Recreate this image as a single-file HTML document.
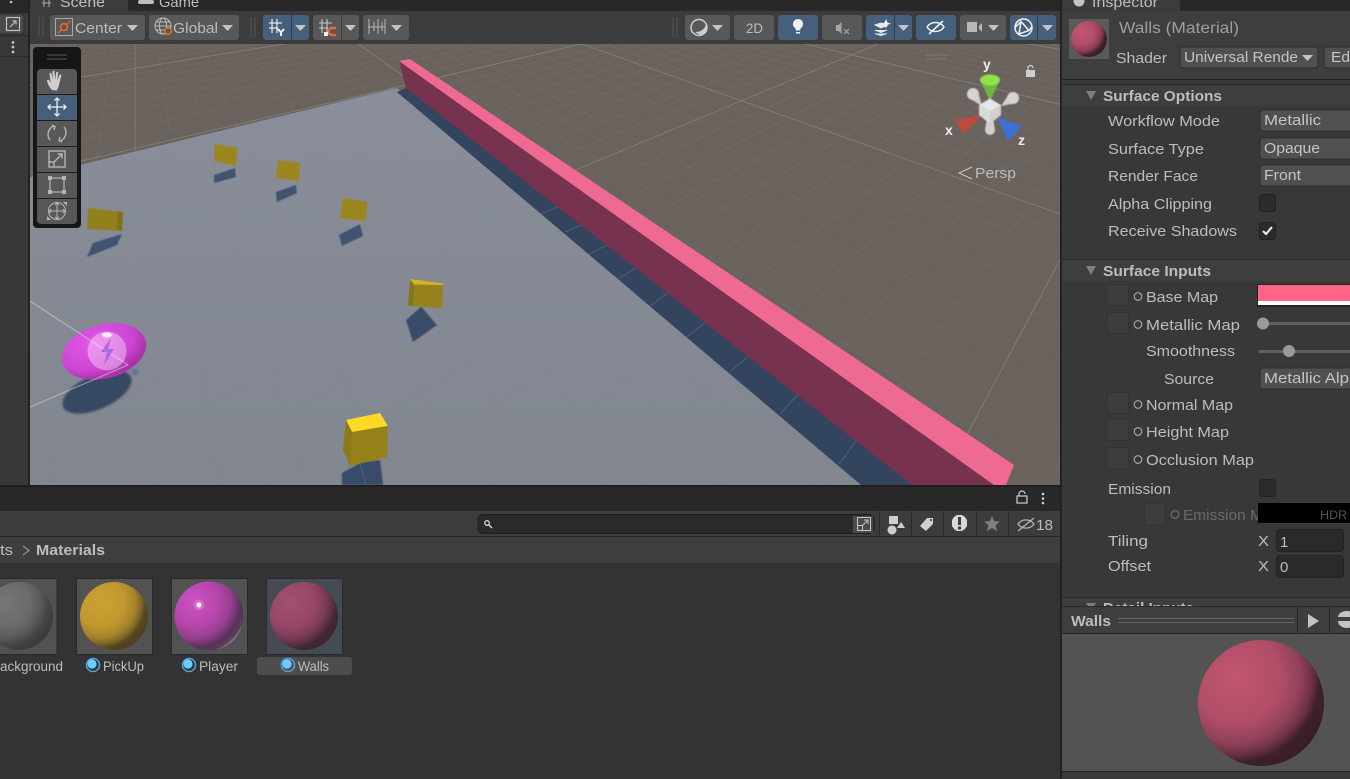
<!DOCTYPE html>
<html><head><meta charset="utf-8"><title>Unity Editor</title>
<style>
html,body{margin:0;padding:0;background:#383838;overflow:hidden}
svg{display:block}
text{font-family:"Liberation Sans",sans-serif;font-size:15px;fill:#bdbdbd}
.b{font-weight:bold;font-size:14.5px}
.t{fill:#c4c4c4}
.d{fill:#6a6a6a}
.btn{fill:#585858}
.blue{fill:#46607c}
.arrow{fill:#c4c4c4}
</style></head><body>
<svg width="1350" height="779" viewBox="0 0 1350 779" xmlns="http://www.w3.org/2000/svg">
<defs>
<radialGradient id="gW" cx=".3" cy=".3" r=".8"><stop offset="0" stop-color="#c2566f"/><stop offset=".45" stop-color="#b04e68"/><stop offset=".65" stop-color="#8f4058"/><stop offset=".76" stop-color="#6a3044"/><stop offset=".83" stop-color="#3f2229"/><stop offset="1" stop-color="#351d24"/></radialGradient>
<radialGradient id="gWd" cx=".3" cy=".3" r=".8"><stop offset="0" stop-color="#a4506f"/><stop offset=".45" stop-color="#964766"/><stop offset=".65" stop-color="#7b3b58"/><stop offset=".76" stop-color="#5f3045"/><stop offset=".84" stop-color="#432935"/><stop offset="1" stop-color="#3a2430"/></radialGradient>
<radialGradient id="gY" cx=".3" cy=".3" r=".8"><stop offset="0" stop-color="#cba233"/><stop offset=".45" stop-color="#bf982f"/><stop offset=".65" stop-color="#a3822a"/><stop offset=".76" stop-color="#7e6526"/><stop offset=".84" stop-color="#54461f"/><stop offset="1" stop-color="#4a3f22"/></radialGradient>
<radialGradient id="gP" cx=".3" cy=".3" r=".8"><stop offset="0" stop-color="#d052c4"/><stop offset=".45" stop-color="#b445aa"/><stop offset=".65" stop-color="#95408e"/><stop offset=".76" stop-color="#73356f"/><stop offset=".83" stop-color="#53325a"/><stop offset=".93" stop-color="#5b3f58"/><stop offset="1" stop-color="#b79ab3"/></radialGradient>
<radialGradient id="gG" cx=".3" cy=".3" r=".8"><stop offset="0" stop-color="#767676"/><stop offset=".45" stop-color="#6b6b6b"/><stop offset=".65" stop-color="#5a5a5a"/><stop offset=".78" stop-color="#464646"/><stop offset=".9" stop-color="#3d3d3d"/><stop offset="1" stop-color="#3b3b3b"/></radialGradient>
<radialGradient id="gBody" cx=".4" cy=".3" r=".8"><stop offset="0" stop-color="#e35ae8"/><stop offset=".6" stop-color="#cc44d2"/><stop offset=".85" stop-color="#a531a8"/><stop offset="1" stop-color="#c13ec6"/></radialGradient>
<linearGradient id="gPlane" x1="0" y1="0" x2="0" y2="1"><stop offset="0" stop-color="#898e9a"/><stop offset="1" stop-color="#81868f"/></linearGradient>
<filter id="bl" x="-20%" y="-20%" width="140%" height="140%"><feGaussianBlur stdDeviation=".5"/></filter>
<filter id="bl2" x="-20%" y="-20%" width="140%" height="140%"><feGaussianBlur stdDeviation="1"/></filter>
<clipPath id="cs"><rect x="30" y="44" width="1030" height="441"/></clipPath>
<clipPath id="cr"><rect x="1062" y="0" width="288" height="779"/></clipPath>
<clipPath id="cp"><polygon points="30,177 397,88 950,485 30,485"/></clipPath>
<path id="gridMinor" fill="none" d="M135 -115L-371 485M135 -115L-287 485M135 -115L-202 485M135 -115L-118 485M135 -115L-34 485M135 -115L51 485M135 -115L219 485M135 -115L304 485M135 -115L388 485M135 -115L472 485M135 -115L557 485M135 -115L641 485M135 -115L725 485M135 -115L810 485M135 -115L894 485M135 -115L1063 485M135 -115L1147 485M135 -115L1232 485M135 -115L1316 485M135 -115L1400 485M135 -115L1485 485M135 -115L1569 485M135 -115L1653 485M135 -115L1738 485M135 -115L1906 485M135 -115L1991 485M135 -115L2075 485M135 -115L2159 485M135 -115L2244 485M135 -115L2328 485M135 -115L2412 485M135 -115L2497 485M135 -115L2581 485M135 -115L2750 485M135 -115L2834 485M135 -115L2919 485M135 -115L3003 485M135 -115L3087 485M135 -115L3172 485M135 -115L3256 485M135 -115L3340 485M135 -115L3425 485M135 -115L3593 485M135 -115L3678 485M1260 -115L-3320 485M1260 -115L-3208 485M1260 -115L-3096 485M1260 -115L-2984 485M1260 -115L-2871 485M1260 -115L-2759 485M1260 -115L-2647 485M1260 -115L-2535 485M1260 -115L-2311 485M1260 -115L-2199 485M1260 -115L-2087 485M1260 -115L-1975 485M1260 -115L-1863 485M1260 -115L-1750 485M1260 -115L-1638 485M1260 -115L-1526 485M1260 -115L-1414 485M1260 -115L-1190 485M1260 -115L-1078 485M1260 -115L-966 485M1260 -115L-854 485M1260 -115L-741 485M1260 -115L-629 485M1260 -115L-517 485M1260 -115L-405 485M1260 -115L-293 485M1260 -115L-69 485M1260 -115L43 485M1260 -115L155 485M1260 -115L267 485M1260 -115L379 485M1260 -115L492 485M1260 -115L604 485M1260 -115L716 485M1260 -115L828 485M1260 -115L1052 485"/>
<path id="gridMajor" fill="none" d="M135 -115L135 485M135 -115L978 485M135 -115L1822 485M135 -115L2666 485M135 -115L3509 485M1260 -115L-2423 485M1260 -115L-1302 485M1260 -115L-181 485M1260 -115L940 485"/>
</defs>

<!-- base -->
<rect width="1350" height="779" fill="#383838"/>

<!-- left strip -->
<rect x="0" y="0" width="30" height="485" fill="#383838"/>
<rect x="0" y="0" width="30" height="13" fill="#282828"/>
<circle cx="11" cy="2" r="1.3" fill="#bbb"/>
<rect x="0" y="13" width="29" height="22" fill="#3c3c3c"/>
<rect x="-6" y="14" width="30" height="20" rx="3" fill="#4a4a4a" stroke="#2b2b2b"/>
<g fill="none" stroke="#c0c0c0" stroke-width="1.2"><rect x="6.5" y="17.5" width="13" height="13"/><path d="M10 27l6-6M12.5 21h3.500v3.500"/></g>
<rect x="0" y="35" width="29" height="1" fill="#2a2a2a"/>
<rect x="0" y="56" width="29" height="1" fill="#2a2a2a"/>
<circle cx="13" cy="42.500" r="1.4" fill="#c4c4c4"/><circle cx="13" cy="47" r="1.4" fill="#c4c4c4"/><circle cx="13" cy="52" r="1.4" fill="#c4c4c4"/>
<rect x="28" y="0" width="2" height="485" fill="#232323"/>

<!-- scene tabs -->
<rect x="30" y="0" width="1030" height="11" fill="#282828"/>
<rect x="30" y="0" width="98" height="11" fill="#3c3c3c"/>
<text x="60" y="7" textLength="45" lengthAdjust="spacingAndGlyphs">Scene</text>
<path d="M44 0v7M49 0v7M42 3h9" stroke="#aaa" fill="none"/>
<rect x="138" y="0" width="16" height="4" rx="2" fill="#bdbdbd"/>
<text x="159" y="7" textLength="40" lengthAdjust="spacingAndGlyphs">Game</text>

<!-- scene toolbar -->
<rect x="30" y="11" width="1030" height="33" fill="#3c3c3c"/>
<path d="M39 17v20M43 17v20M255 17v20M251 17v20M673 17v20M677 17v20" stroke="#565656"/>
<rect class="btn" x="50" y="15" width="95" height="25" rx="3"/>
<rect x="55.500" y="18.500" width="17" height="17" fill="none" stroke="#aaa"/>
<circle cx="64" cy="27" r="3.500" fill="none" stroke="#ea6a33" stroke-width="1.600"/><path d="M58 33l3.500-3.500M67 24l3.500-3.500" stroke="#ea6a33" stroke-width="1.200"/>
<text x="75" y="33" textLength="47" lengthAdjust="spacingAndGlyphs">Center</text>
<path class="arrow" d="M127 25h11l-5.500 6z"/>
<rect class="btn" x="149" y="15" width="90" height="25" rx="3"/>
<g fill="none" stroke="#bdbdbd"><circle cx="163" cy="26" r="8"/><ellipse cx="163" cy="26" rx="3.500" ry="8"/><path d="M155 26h16M156 22h14M156 30h14"/></g>
<circle cx="168" cy="31" r="3.200" fill="#585858" stroke="#ea6a33" stroke-width="1.600"/>
<text x="173" y="33" textLength="45" lengthAdjust="spacingAndGlyphs">Global</text>
<path class="arrow" d="M222 25h11l-5.500 6z"/>
<rect class="blue" x="263" y="15" width="46" height="25" rx="3"/><rect x="291" y="15" width="1" height="25" fill="#2d3d50"/>
<g stroke="#e8e8e8" fill="none" stroke-width="1.200"><path d="M272 19v14M277 19v14M269 23h13M269 28h9"/></g>
<path d="M278 29l3 3.500 3-3.500M281 32v4" stroke="#f2f2f2" stroke-width="2" fill="none"/>
<path class="arrow" d="M295 25h11l-5.500 6z"/>
<rect class="btn" x="313" y="15" width="46" height="25" rx="3"/><rect x="341" y="15" width="1" height="25" fill="#3a3a3a"/>
<g stroke="#c8c8c8" fill="none" stroke-width="1.100"><path d="M322 19v14M327 19v14M319 23h13M319 28h9"/></g>
<path d="M336 28h-4a3.500 3.500 0 0 0 0 7h4" fill="none" stroke="#ea6a33" stroke-width="2.400"/>
<rect x="324" y="32" width="4" height="4" fill="#eee"/>
<path class="arrow" d="M345 25h11l-5.500 6z"/>
<rect class="btn" x="363" y="15" width="46" height="25" rx="3"/>
<path d="M369 19v15M374 22v9M378 19v15M382 22v9M385 19v15M368 27h17" stroke="#b8b8b8" fill="none"/>
<path class="arrow" d="M391 25h11l-5.500 6z"/>
<rect class="btn" x="685" y="15" width="45" height="25" rx="3"/>
<circle cx="699" cy="27.500" r="8" fill="none" stroke="#cfcfcf" stroke-width="1.500"/><path d="M706 23c-.5 6-5 9-11 9 4 4 10 3 12-1 1-3 0-6-1-8z" fill="#cfcfcf"/>
<path class="arrow" d="M712 25h11l-5.500 6z"/>
<rect class="btn" x="734" y="15" width="40" height="25" rx="3"/>
<text x="746" y="33" textLength="17" lengthAdjust="spacingAndGlyphs" style="font-size:14px">2D</text>
<rect class="blue" x="778" y="15" width="40" height="25" rx="3"/>
<path d="M798 19a5 5 0 0 1 3 9c-.7.7-.8 1.800-.8 2.500h-4.400c0-.7-.1-1.800-.8-2.500a5 5 0 0 1 3-9zM796 32h4v1.500h-4z" fill="#f2f2f2"/>
<rect class="btn" x="822" y="15" width="40" height="25" rx="3"/>
<path d="M836 25h2.500l3-3v12l-3-3h-2.500z" fill="#a5a5a5"/><path d="M844 29l5 5M849 29l-5 5" stroke="#a5a5a5" stroke-width="1.200"/>
<rect class="blue" x="866" y="15" width="46" height="25" rx="3"/><rect x="894" y="15" width="1" height="25" fill="#2d3d50"/>
<path d="M875 25l6-2 6 2.500-6 2.500zM875 30l6 2.500 6-2.500M875 33.500l6 2 6-2" fill="#e8e8e8" stroke="#e8e8e8"/><path d="M886 19l1.500 3.500 3.500 1.200-3.500 1.200-1.500 3.500-1.500-3.500-3.500-1.200 3.500-1.200z" fill="#f0f0f0"/>
<path class="arrow" d="M898 25h11l-5.500 6z"/>
<rect class="blue" x="916" y="15" width="40" height="25" rx="3"/>
<path d="M927 27c4-6 13-6 17 0-4 6-13 6-17 0z" fill="none" stroke="#f0f0f0" stroke-width="1.500"/><path d="M929 34l14-13" stroke="#f0f0f0" stroke-width="1.600"/>
<rect class="btn" x="960" y="15" width="46" height="25" rx="3"/>
<rect x="967" y="22" width="10" height="10" fill="#b9b9b9"/><path d="M979 26l3-3v9l-3-3z" fill="#b9b9b9"/>
<path class="arrow" d="M988 25h11l-5.500 6z"/>
<rect class="blue" x="1010" y="15" width="46" height="25" rx="3"/><rect x="1037" y="15" width="1" height="25" fill="#2d3d50"/>
<g fill="none" stroke="#f0f0f0" stroke-width="1.500"><circle cx="1023.500" cy="27.500" r="8.500"/><path d="M1015 27.500l6-6 8 9M1021 21l-2 13 10-3.500 2.500-3.500"/></g>
<path class="arrow" d="M1042 25h11l-5.500 6z"/>

<!-- scene view -->
<g clip-path="url(#cs)">
<rect x="30" y="44" width="1030" height="441" fill="#69625d"/>
<use href="#gridMinor" stroke="#8a857f" stroke-width=".6" opacity=".3"/>
<use href="#gridMajor" stroke="#8f8a86" stroke-width=".9" opacity=".7"/>
<polygon points="30,177 397,88 950,485 30,485" fill="url(#gPlane)"/>
<g clip-path="url(#cp)">
<use href="#gridMinor" stroke="#76716c" stroke-width=".6" opacity=".1"/>
<use href="#gridMajor" stroke="#928e8e" stroke-width=".8" opacity=".35"/>
</g>
<!-- wall shadow -->
<polygon points="397,92 406,88 925,485 861,485" fill="#33445e"/>
<path d="M541 214l19-8M565 232l18-8M589 254l20-10M618 279l21-13M650 306l20-15M687 337l21-17M730 372l21-18M780 414l20-22M839 464l20-27" stroke="#4f5f78" fill="none"/>
<!-- wall -->
<polygon points="399,61 406,88 912,485 994,485" fill="#76324f"/>
<polygon points="399,61 410,59 1014,465 1006,485 994,485" fill="#ee6a92"/>
<!-- pickups -->
<g filter="url(#bl)">
<polygon points="214,175 235,168 236,177 214,183" fill="#3f5270"/>
<polygon points="276,192 296,185 297,193 277,202" fill="#3f5270"/>
<polygon points="339,235 360,224 363,236 342,246" fill="#3f5270"/>
<polygon points="87,257 93,243 122,234 117,245" fill="#3f5270"/>
<polygon points="406,320 421,307 437,325 413,342" fill="#384b68"/>
<polygon points="342,473 360,463 380,460 383,485 342,485" fill="#384b68"/>
<polygon points="215,144 237,148 236,166 214,161" fill="#9a861e"/>
<polygon points="278,160 300,163 299,181 276,178" fill="#9a861e"/>
<polygon points="343,198 367,202 366,221 340,218" fill="#9a861e"/>
<polygon points="88,208 123,212 122,231 87,229" fill="#93801c"/>
<polygon points="118,211 123,212 122,231 117,230" fill="#80701c"/>
</g>
<path d="M422 308l15 18" stroke="#4f5f78" fill="none"/>
<polygon points="413,283 443,284 442,308 409,306" fill="#95821a"/>
<polygon points="410,280 414,284 413,306 408,305" fill="#85741a"/>
<polygon points="410,279 443,283.500 443,285 414,284.500" fill="#d4b522"/>
<path d="M360 463l6 22" stroke="#4f5f78" fill="none"/>
<polygon points="346,420 380,413 388,426 352,432" fill="#ffd925"/>
<polygon points="352,432 388,426 387,457 350,466" fill="#95811a"/>
<polygon points="346,420 352,432 350,466 343,450" fill="#8b7914"/>
<!-- player -->
<ellipse cx="97" cy="392" rx="37" ry="17" transform="rotate(-24 97 392)" fill="#354862" filter="url(#bl2)"/>
<circle cx="135" cy="372" r="3.500" fill="#2f5a9c" opacity=".4" filter="url(#bl2)"/>
<ellipse cx="104" cy="351.500" rx="43" ry="27" transform="rotate(-15 104 351.500)" fill="url(#gBody)"/>
<path d="M30 301L128 365L30 407" fill="none" stroke="#d8d8d8" stroke-width="1" opacity=".6"/>
<circle cx="107" cy="351" r="19.500" fill="#fff" opacity=".36"/>
<path d="M111 338L101 352L107 352L104 365L114 349L108 349Z" fill="#8a50d8" opacity=".6"/>
<ellipse cx="107" cy="335" rx="5" ry="2.500" fill="#fff" opacity=".85" filter="url(#bl)"/>
<!-- gizmo -->
<path d="M925 55h20M925 59h20" stroke="#807a76" fill="none" transform="translate(1 0)"/>
<g filter="url(#bl)">
<polygon points="982,106 968.200,97.600 977.800,90.400" fill="#cfcdcb"/><circle cx="973" cy="94" r="6" fill="#d6d4d2"/>
<polygon points="1001,106 1016.300,103 1009.700,93" fill="#cfcdcb"/><circle cx="1013" cy="98" r="6" fill="#d6d4d2"/>
<path d="M987 118l-2 12a5 5 0 0 0 10 0l-2-12z" fill="#d2d0ce"/>
<path d="M980 80h20l-10 21z" fill="#6db843"/>
<ellipse cx="990" cy="80" rx="10" ry="5.500" fill="#8fe24a"/>
<polygon points="955,120 982,115 964,134" fill="#c04a3e"/>
<polygon points="1022,126 997,117 1008,141" fill="#3e6fd6"/>
<polygon points="990,98.500 1001,105 990,112 979,105" fill="#e6e6e6"/>
<polygon points="979,105 990,112 990,124 979,115" fill="#dadada"/>
<polygon points="1001,105 990,112 990,124 1001,115" fill="#cfcfcf"/>
</g>
<text x="983" y="69" class="b" style="fill:#eee;font-size:14px">y</text>
<text x="945" y="135" class="b" style="fill:#eee;font-size:14px">x</text>
<text x="1018" y="145" class="b" style="fill:#eee;font-size:14px">z</text>
<rect x="1026" y="70" width="9" height="7" fill="#cfcfcf"/><path d="M1028 70v-2a2.500 2.500 0 0 1 5 0" stroke="#cfcfcf" fill="none" stroke-width="1.300"/>
<path d="M972 167l-13 6 13 6" fill="none" stroke="#c9c9c9"/>
<text x="975" y="178" textLength="41" lengthAdjust="spacingAndGlyphs">Persp</text>
<!-- tool palette -->
<rect x="33" y="47" width="48" height="181" rx="4" fill="#161616"/>
<path d="M47 55h20M47 59h20" stroke="#555"/>
<rect x="37" y="69" width="40" height="155" rx="4" fill="#585858"/>
<rect x="37" y="95" width="40" height="25" fill="#46607c"/>
<path d="M37 94.500h40M37 120.500h40M37 146.500h40M37 172.500h40M37 198.500h40" stroke="#1c1c1c"/>
<path d="M52 90c-3-3-4-6-5-9-.4-1.500 1.500-2 2.200-.6l1.500 2.600-1.200-9c-.2-1.500 1.800-1.800 2-.3l1.200 6-.2-8c0-1.500 2-1.500 2 0l.6 8 1-7c.2-1.500 2.200-1.200 2 .3l-.8 7.700 2-5.500c.5-1.400 2.400-.8 2 .6l-2 8c-.6 3-1.500 5-2.600 6.800z" fill="#cfcfcf"/>
<g stroke="#eee" fill="none" stroke-width="1.300"><path d="M57 98v18M48 107h18M54.500 100.500l2.500-2.500 2.500 2.500M54.500 113.500l2.500 2.500 2.500-2.500M50.500 104.500l-2.500 2.500 2.500 2.500M63.500 104.500l2.500 2.500-2.500 2.500"/></g>
<g stroke="#b5b5b5" fill="none" stroke-width="1.400"><path d="M50 140a9 9 0 0 1 4-14M64 127a9 9 0 0 1-4 14M52 125l3 1.500-1 3.500M62 142l-3-1.500 1-3.500"/></g>
<g stroke="#b5b5b5" fill="none" stroke-width="1.400"><rect x="49" y="151" width="16" height="16"/><path d="M49 162h5v5M54 162l8-8M57.500 154h4.500v4.500"/></g>
<g fill="#b5b5b5"><rect x="48" y="176" width="4" height="4"/><rect x="62" y="176" width="4" height="4"/><rect x="48" y="190" width="4" height="4"/><rect x="62" y="190" width="4" height="4"/></g><rect x="50" y="178" width="14" height="14" fill="none" stroke="#b5b5b5" stroke-width="1.200"/>
<g fill="none" stroke="#b5b5b5"><circle cx="57" cy="211" r="8.500"/><path d="M57 203v16M49 211h16M55 205l2-2 2 2M55 217l2 2 2-2M51 209l-2 2 2 2M63 209l2 2-2 2"/></g>
<path d="M47 220l4 0-4-4zM67 202l-4 0 4 4z" fill="#b5b5b5"/>
</g>

<!-- bottom panel -->
<rect x="0" y="485" width="1060" height="26" fill="#282828"/>
<rect x="0" y="485" width="1060" height="2" fill="#1f1f1f"/>
<rect x="1017" y="496" width="10" height="7" fill="none" stroke="#d0d0d0" stroke-width="1.200"/><path d="M1019 496v-2a3 3 0 0 1 6 0" fill="none" stroke="#d0d0d0" stroke-width="1.200"/>
<circle cx="1043" cy="494" r="1.300" fill="#cfcfcf"/><circle cx="1043" cy="498.500" r="1.300" fill="#cfcfcf"/><circle cx="1043" cy="503" r="1.300" fill="#cfcfcf"/>
<rect x="0" y="511" width="1060" height="25" fill="#3c3c3c"/>
<rect x="0" y="536" width="1060" height="1" fill="#262626"/>
<rect x="478" y="514.500" width="396" height="19" rx="5" fill="#2a2a2a" stroke="#1f1f1f"/>
<circle cx="487" cy="523" r="2.300" fill="none" stroke="#d8d8d8" stroke-width="1.300"/><path d="M489 525l3 3" stroke="#d8d8d8" stroke-width="1.500"/>
<rect x="853" y="516" width="20" height="17" fill="#4b4b4b"/>
<g fill="none" stroke="#c4c4c4"><rect x="857.500" y="517.500" width="13" height="13"/><rect x="857.500" y="525.500" width="5" height="5"/><path d="M862 526l6-6M864 520h4v4"/></g>
<path d="M879.500 511v25M911.500 511v25M943.500 511v25M976.500 511v25M1008.500 511v25" stroke="#2a2a2a"/>
<g fill="#cfcfcf"><rect x="889" y="516" width="9" height="8"/><circle cx="892" cy="530" r="4.500"/><path d="M897 528l4-6 4 6z"/></g>
<path d="M920 526l7-8h6v6l-7 7z" fill="#cfcfcf"/><circle cx="931" cy="520" r="1" fill="#3c3c3c"/>
<path d="M954 517l3-2h5l3 2 2 3v6l-2 3-3 2h-5l-3-2-2-3v-6z" fill="#d8d8d8"/><rect x="958" y="517" width="3" height="8" fill="#3c3c3c"/><rect x="958" y="526.500" width="3" height="3" fill="#3c3c3c"/>
<path d="M992 516l2.200 5 5.800.5-4.400 3.800 1.400 5.700-5-3-5 3 1.400-5.700-4.400-3.800 5.800-.5z" fill="#7e7e7e"/>
<path d="M1018 524c4-5.500 12-5.500 16 0-4 5.500-12 5.500-16 0z" fill="none" stroke="#b5b5b5" stroke-width="1.300"/><path d="M1018 531l16-13" stroke="#b5b5b5" stroke-width="1.300"/>
<text x="1036" y="530" textLength="17" lengthAdjust="spacingAndGlyphs">18</text>

<rect x="0" y="537" width="1060" height="26" fill="#3e3e3e"/>
<text x="0" y="555" textLength="13" lengthAdjust="spacingAndGlyphs">ts</text>
<path d="M23 546l6 4.500-6 4.500" fill="none" stroke="#8d8d8d" stroke-width="1.300"/>
<text class="b" x="36" y="555" textLength="69" lengthAdjust="spacingAndGlyphs">Materials</text>

<rect x="0" y="563" width="1060" height="216" fill="#333333"/>
<g fill="#525252" stroke="#2a2a2a"><rect x="-20" y="578.500" width="77" height="76"/><rect x="76.500" y="578.500" width="76" height="76"/><rect x="171.500" y="578.500" width="76" height="76"/></g>
<rect x="266.500" y="578.500" width="76" height="76" fill="#454b55" stroke="#2a2a2a"/>
<circle cx="19" cy="616" r="34" fill="url(#gG)"/>
<circle cx="114" cy="616" r="34" fill="url(#gY)"/>
<circle cx="209" cy="616" r="34.500" fill="url(#gP)"/>
<circle cx="199" cy="605" r="2.400" fill="#fff"/><circle cx="199" cy="605" r="5" fill="#fff" opacity=".2"/>
<circle cx="304" cy="616" r="34" fill="url(#gWd)"/>
<rect x="257" y="657" width="95" height="18" rx="3" fill="#4d4d4d"/>
<text x="0" y="671" textLength="63" lengthAdjust="spacingAndGlyphs" style="font-size:13.500px">ackground</text>
<circle cx="93" cy="665" r="6.500" fill="#333" stroke="#4aa6d8" stroke-width="1.500"/><circle cx="92" cy="664" r="4.600" fill="#6cccff"/>
<text x="103" y="671" textLength="41" lengthAdjust="spacingAndGlyphs" style="font-size:13.500px">PickUp</text>
<circle cx="189" cy="665" r="6.500" fill="#333" stroke="#4aa6d8" stroke-width="1.500"/><circle cx="188" cy="664" r="4.600" fill="#6cccff"/>
<text x="199" y="671" textLength="39" lengthAdjust="spacingAndGlyphs" style="font-size:13.500px">Player</text>
<circle cx="288" cy="665" r="6.500" fill="#4d4d4d" stroke="#4aa6d8" stroke-width="1.500"/><circle cx="287" cy="664" r="4.600" fill="#6cccff"/>
<text x="298" y="671" textLength="31" lengthAdjust="spacingAndGlyphs" style="font-size:13.500px">Walls</text>

<!-- inspector -->
<rect x="1060" y="0" width="2" height="779" fill="#232323"/>
<g clip-path="url(#cr)">
<rect x="1062" y="0" width="288" height="11" fill="#282828"/>
<rect x="1062" y="0" width="118" height="11" fill="#3c3c3c"/>
<circle cx="1079" cy="1" r="5.500" fill="#c4c4c4"/>
<text x="1092" y="7" textLength="66" lengthAdjust="spacingAndGlyphs">Inspector</text>
<rect x="1062" y="11" width="288" height="68" fill="#3e3e3e"/>
<rect x="1069" y="19" width="40" height="40" fill="#5a5a5a"/>
<circle cx="1089" cy="39" r="18" fill="url(#gW)"/>
<text x="1119" y="33" textLength="120" lengthAdjust="spacingAndGlyphs" style="font-size:15.500px;fill:#9e9e9e">Walls (Material)</text>
<text x="1116" y="63" textLength="51" lengthAdjust="spacingAndGlyphs">Shader</text>
<rect x="1180" y="47" width="138" height="21" rx="3" fill="#505050" stroke="#2e2e2e"/>
<text x="1184" y="62" textLength="114" lengthAdjust="spacingAndGlyphs" class="t">Universal Rende</text>
<path class="arrow" d="M1302 55h11l-5.500 6z"/>
<rect x="1324" y="47" width="40" height="21" rx="3" fill="#505050" stroke="#2e2e2e"/>
<text x="1331" y="62" textLength="19" lengthAdjust="spacingAndGlyphs" class="t">Ed</text>
<rect x="1062" y="79" width="288" height="1" fill="#232323"/>
<rect x="1062" y="84" width="288" height="1" fill="#2a2a2a"/>
<rect x="1062" y="85" width="288" height="21" fill="#3e3e3e"/>
<path d="M1086 91h10l-5 9z" fill="#7d7d7d"/>
<text class="b" x="1103" y="101" textLength="119" lengthAdjust="spacingAndGlyphs">Surface Options</text>
<text x="1108" y="126" textLength="112" lengthAdjust="spacingAndGlyphs">Workflow Mode</text>
<text x="1108" y="154" textLength="96" lengthAdjust="spacingAndGlyphs">Surface Type</text>
<text x="1108" y="181" textLength="90" lengthAdjust="spacingAndGlyphs">Render Face</text>
<text x="1108" y="209" textLength="104" lengthAdjust="spacingAndGlyphs">Alpha Clipping</text>
<text x="1108" y="236" textLength="129" lengthAdjust="spacingAndGlyphs">Receive Shadows</text>
<g fill="#505050" stroke="#2e2e2e"><rect x="1260" y="110" width="110" height="21" rx="3"/><rect x="1260" y="138" width="110" height="21" rx="3"/><rect x="1260" y="165" width="110" height="21" rx="3"/><rect x="1260" y="368" width="110" height="21" rx="3"/></g>
<text class="t" x="1264" y="125" textLength="57" lengthAdjust="spacingAndGlyphs">Metallic</text>
<text class="t" x="1264" y="153" textLength="56" lengthAdjust="spacingAndGlyphs">Opaque</text>
<text class="t" x="1264" y="180" textLength="37" lengthAdjust="spacingAndGlyphs">Front</text>
<g fill="#2b2b2b" stroke="#222"><rect x="1259.500" y="194.500" width="16" height="17" rx="3"/><rect x="1259.500" y="222.500" width="16" height="17" rx="3"/><rect x="1259.500" y="479.500" width="16" height="17" rx="3"/></g>
<path d="M1263 231l3 3 6-7" fill="none" stroke="#f0f0f0" stroke-width="2"/>
<rect x="1062" y="259" width="288" height="1" fill="#2a2a2a"/>
<rect x="1062" y="260" width="288" height="21" fill="#3e3e3e"/>
<path d="M1086 266h10l-5 9z" fill="#7d7d7d"/>
<text class="b" x="1103" y="276" textLength="108" lengthAdjust="spacingAndGlyphs">Surface Inputs</text>
<g fill="#3d3d3d" stroke="#333"><rect x="1107.500" y="284.500" width="21" height="21"/><rect x="1107.500" y="312.500" width="21" height="21"/><rect x="1107.500" y="392.500" width="21" height="21"/><rect x="1107.500" y="419.500" width="21" height="21"/><rect x="1107.500" y="447.500" width="21" height="21"/><rect x="1144.500" y="503.500" width="21" height="21"/></g>
<g fill="none" stroke="#ababab" stroke-width="1.100"><circle cx="1138" cy="296.500" r="3.800"/><circle cx="1138" cy="324.500" r="3.800"/><circle cx="1138" cy="404.500" r="3.800"/><circle cx="1138" cy="431.500" r="3.800"/><circle cx="1138" cy="459.500" r="3.800"/></g>
<circle cx="1175" cy="514.500" r="3.800" fill="none" stroke="#707070" stroke-width="1.200"/>
<text x="1146" y="302" textLength="72" lengthAdjust="spacingAndGlyphs">Base Map</text>
<text x="1146" y="330" textLength="94" lengthAdjust="spacingAndGlyphs">Metallic Map</text>
<text x="1146" y="356" textLength="89" lengthAdjust="spacingAndGlyphs">Smoothness</text>
<text x="1164" y="384" textLength="50" lengthAdjust="spacingAndGlyphs">Source</text>
<text x="1146" y="410" textLength="87" lengthAdjust="spacingAndGlyphs">Normal Map</text>
<text x="1146" y="437" textLength="83" lengthAdjust="spacingAndGlyphs">Height Map</text>
<text x="1146" y="465" textLength="108" lengthAdjust="spacingAndGlyphs">Occlusion Map</text>
<text x="1108" y="494" textLength="63" lengthAdjust="spacingAndGlyphs">Emission</text>
<text class="d" x="1183" y="520" textLength="97" lengthAdjust="spacingAndGlyphs">Emission Map</text>
<text x="1108" y="546" textLength="40" lengthAdjust="spacingAndGlyphs">Tiling</text>
<text x="1108" y="571" textLength="43" lengthAdjust="spacingAndGlyphs">Offset</text>
<rect x="1257" y="284" width="100" height="23" fill="#222"/>
<rect x="1258" y="285" width="100" height="16" fill="#ff6488"/>
<rect x="1258" y="301" width="100" height="4" fill="#fff"/>
<rect x="1259" y="322" width="100" height="3" fill="#606060"/>
<circle cx="1263" cy="323.500" r="6" fill="#999"/>
<rect x="1259" y="350" width="100" height="3" fill="#606060"/>
<circle cx="1289" cy="351" r="6" fill="#999"/>
<text class="t" x="1264" y="383" textLength="85" lengthAdjust="spacingAndGlyphs">Metallic Alp</text>
<rect x="1258" y="503" width="100" height="20" fill="#000"/>
<text x="1320" y="519" textLength="27" lengthAdjust="spacingAndGlyphs" style="font-size:12px;fill:#555">HDR</text>
<text x="1258" y="546" textLength="11" lengthAdjust="spacingAndGlyphs">X</text>
<text x="1258" y="571" textLength="11" lengthAdjust="spacingAndGlyphs">X</text>
<rect x="1276.500" y="529.500" width="67" height="22" rx="3" fill="#2a2a2a" stroke="#232323"/>
<rect x="1276.500" y="555.500" width="67" height="22" rx="3" fill="#2a2a2a" stroke="#232323"/>
<text x="1280" y="547">1</text>
<text x="1280" y="572">0</text>
<rect x="1062" y="597" width="288" height="1" fill="#2a2a2a"/>
<rect x="1062" y="598" width="288" height="9" fill="#3e3e3e"/>
<text class="b" x="1103" y="613" textLength="91" lengthAdjust="spacingAndGlyphs">Detail Inputs</text>
<path d="M1086 603h10l-2 3h-6z" fill="#7d7d7d"/>
<rect x="1062" y="606" width="288" height="27" fill="#3e3e3e"/>
<rect x="1062" y="606" width="288" height="1" fill="#2a2a2a"/>
<rect x="1062" y="633" width="288" height="1" fill="#232323"/>
<text class="b" x="1071" y="626" textLength="40" lengthAdjust="spacingAndGlyphs">Walls</text>
<path d="M1118 618.500h176M1118 622.500h176" stroke="#666"/>
<path d="M1297.500 607v26M1329.500 607v26" stroke="#2a2a2a"/>
<path d="M1308 614l11 7-11 7z" fill="#c4c4c4"/>
<path d="M1338 617a9 6 0 0 1 18 0zM1338 621h18a9 7 0 0 1-18 0z" fill="#c4c4c4"/>
<rect x="1062" y="634" width="288" height="137" fill="#535353"/>
<circle cx="1261" cy="703" r="63" fill="url(#gW)"/>
<rect x="1062" y="771" width="288" height="1" fill="#232323"/>
<rect x="1062" y="772" width="288" height="7" fill="#3a3a3a"/>
</g>
</svg>
</body></html>
